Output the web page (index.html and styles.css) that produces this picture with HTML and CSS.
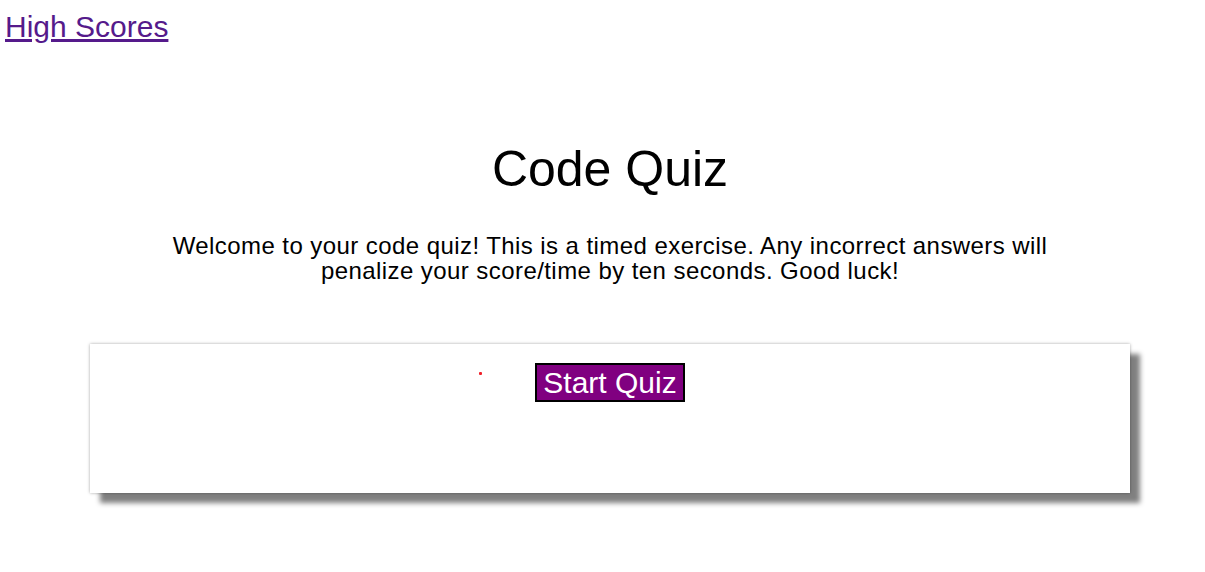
FILE: index.html
```html
<!DOCTYPE html>
<html>
<head>
<meta charset="utf-8">
<link rel="stylesheet" href="styles.css">
</head>
<body>
<header class="top">
  <a class="scores" href="#">High Scores</a>
</header>
<main class="main">
  <h1 class="title">Code Quiz</h1>
  <p class="intro">Welcome to your code quiz! This is a timed exercise. Any incorrect answers will penalize your score/time by ten seconds. Good luck!</p>
  <section class="card">
    <span class="dot"></span>
    <button class="start">Start Quiz</button>
  </section>
</main>
</body>
</html>
```
FILE: styles.css
```css
html, body {
  margin: 0;
  padding: 0;
  background: #fff;
  font-family: "Liberation Sans", Arial, sans-serif;
  color: #000;
}
.top {
  padding: 10px 0 0 5px;
}
.scores {
  font-size: 30px;
  color: #551a8b;
  text-decoration: underline;
}
.main {
  padding: 0 0 70px 15px;
  text-align: center;
}
.title {
  font-size: 50px;
  font-weight: normal;
  margin: 96px 0 0 0;
}
.intro {
  font-size: 24px;
  letter-spacing: 0.43px;
  margin: 35px auto 0;
  width: 920px;
  line-height: 25px;
}
.card {
  position: relative;
  margin: 61px 75px 0;
  height: 149px;
  box-sizing: border-box;
  padding-top: 19px;
  background: #fff;
  box-shadow: 0 0 3px rgba(0,0,0,0.35), 10px 10px 5px #808080;
}
.start {
  font-family: "Liberation Sans", Arial, sans-serif;
  font-size: 30px;
  line-height: 33px;
  color: #fff;
  background: #800080;
  border: 2px solid #000;
  padding: 1px 6px;
  margin: 0;
}
.dot {
  position: absolute;
  left: 389px;
  top: 28px;
  width: 3px;
  height: 3px;
  border-radius: 1px;
  background: #f0202a;
}
```
